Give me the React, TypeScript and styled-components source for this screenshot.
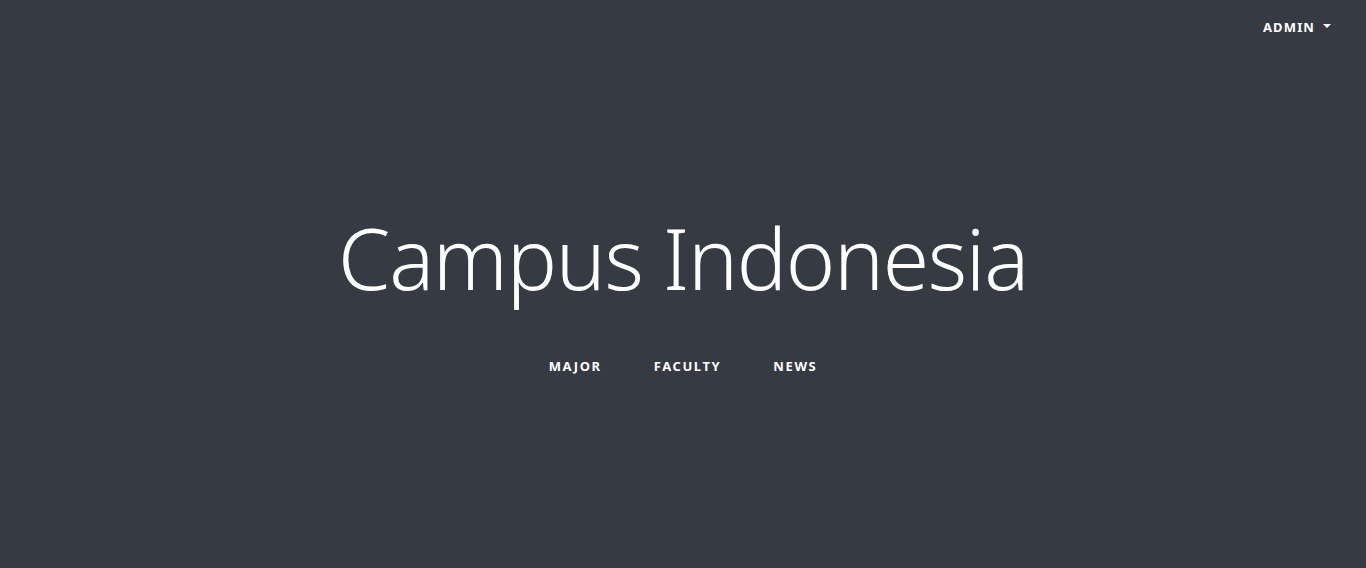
import React from "react";
import styled, { createGlobalStyle } from "styled-components";

const Global = createGlobalStyle`
  html, body { margin: 0; padding: 0; }
  body {
    background: #363a42;
    color: #ffffff;
    font-family: "Noto Sans", "Open Sans", sans-serif;
    height: 100vh;
  }
`;

const Page = styled.div`
  height: 100vh;
  display: flex;
  align-items: center;
  justify-content: center;
  position: relative;
`;

const TopRight = styled.div`
  position: absolute;
  right: 35px;
  top: 17px;
  display: flex;
  align-items: center;
  gap: 8px;
`;

const NavText = styled.a`
  color: #ffffff;
  font-size: 13px;
  font-weight: 700;
  letter-spacing: 0.07rem;
  text-transform: uppercase;
  text-decoration: none;
  line-height: 20px;
`;

const Caret = styled.span`
  width: 0;
  height: 0;
  border-left: 4px solid transparent;
  border-right: 4px solid transparent;
  border-top: 4px solid #ffffff;
  margin-top: -2px;
`;

const Content = styled.div`
  text-align: center;
  margin-top: 16px;
`;

const Title = styled.h1`
  margin: 0 0 48px;
  font-size: 84px;
  font-weight: 300;
  letter-spacing: -1.3px;
  line-height: 1.2;
`;

const Links = styled.nav`
  display: flex;
  justify-content: center;
`;

const LinkItem = styled(NavText)`
  padding: 0 26px;
  letter-spacing: 0.1rem;
`;

export default function App() {
  return (
    <>
      <Global />
      <Page>
        <TopRight>
          <NavText href="#">Admin</NavText>
          <Caret />
        </TopRight>
        <Content>
          <Title>Campus Indonesia</Title>
          <Links>
            <LinkItem href="#">Major</LinkItem>
            <LinkItem href="#">Faculty</LinkItem>
            <LinkItem href="#">News</LinkItem>
          </Links>
        </Content>
      </Page>
    </>
  );
}
